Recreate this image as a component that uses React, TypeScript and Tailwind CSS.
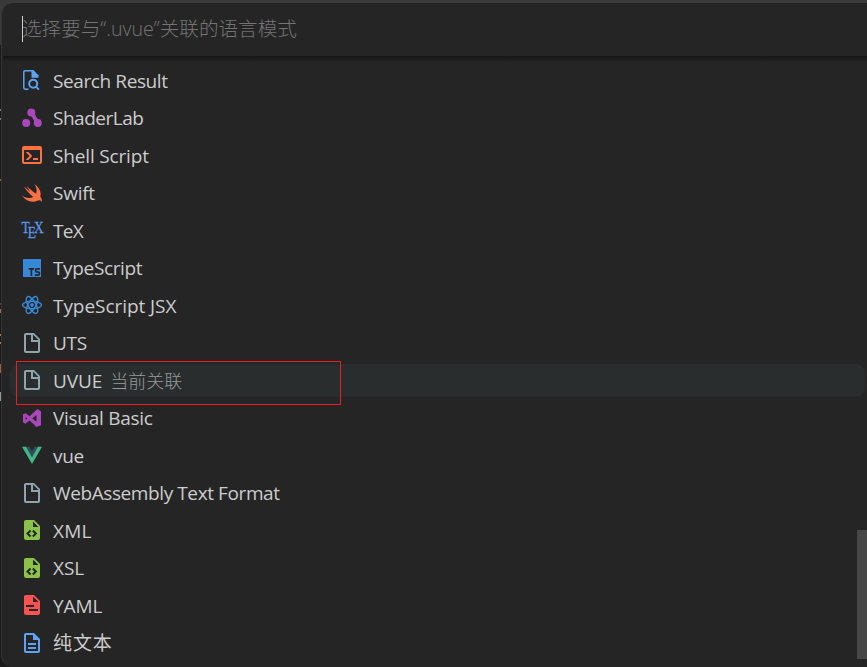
import React from 'react';

const FILE = 'M6 2h8l6 6v12a2 2 0 0 1-2 2H6a2 2 0 0 1-2-2V4c0-1.11.89-2 2-2';

function Svg({ children }: { children: React.ReactNode }) {
  return (
    <svg viewBox="0 0 24 24" className="block h-6 w-6 shrink-0 overflow-visible">
      {children}
    </svg>
  );
}

const plainFile = (
  <Svg>
    <path fill="#90a4ae" d="M13 9h5.500L13 3.500V9M6 2h8l6 6v12a2 2 0 0 1-2 2H6a2 2 0 0 1-2-2V4c0-1.110.890-2 2-2m5 2H6v16h12v-9h-7V4z" />
  </Svg>
);

const xmlFile = (
  <Svg>
    <path
      fill="#8bc34a"
      d={`M13 9h5.500L13 3.500V9${FILE}M6.120 15.500L9.860 19.240L11.280 17.830L8.950 15.500L11.280 13.170L9.860 11.760L6.120 15.500M17.280 15.500L13.540 11.760L12.120 13.170L14.450 15.500L12.120 17.830L13.540 19.240L17.280 15.500Z`}
    />
  </Svg>
);

const icons: Record<string, React.ReactNode> = {
  search: (
    <Svg>
      <path fill="none" stroke="#5ca3f5" strokeWidth="1.500" d="M8.500 21.200H5.200a1.400 1.400 0 0 1-1.400-1.400V4.100a1.400 1.400 0 0 1 1.400-1.400H12" />
      <path fill="#5ca3f5" d="M11.500 2H13.300L18.500 7.200V9.800h-7z" />
      <circle cx="13.200" cy="15.700" r="4" fill="none" stroke="#5ca3f5" strokeWidth="2" />
      <path stroke="#5ca3f5" strokeWidth="2" d="M15.900 18.600l3 3" />
    </Svg>
  ),
  shader: (
    <Svg>
      <path stroke="#ab47bc" strokeWidth="4" d="M11.500 6.500l6.500 11" />
      <g fill="#ab47bc">
        <circle cx="11.300" cy="6.500" r="4" />
        <circle cx="6.200" cy="16.900" r="4" />
        <circle cx="17.800" cy="16.900" r="4" />
      </g>
    </Svg>
  ),
  shell: (
    <Svg>
      <path fill="#ff7043" d="M20 19V7H4V19H20M20 3A2 2 0 0 1 22 5V19A2 2 0 0 1 20 21H4A2 2 0 0 1 2 19V5C2 3.890 2.900 3 4 3H20M13 17V15H18V17H13M9.580 13L5.570 9H8.400L11.700 12.300C12.090 12.690 12.090 13.330 11.700 13.720L8.420 17H5.590L9.580 13Z" />
    </Svg>
  ),
  swift: (
    <Svg>
      <path fill="#ff7043" d="M17.090 19.720C14.730 21.080 11.500 21.220 8.230 19.820C5.590 18.700 3.400 16.740 2 14.500C2.670 15.050 3.460 15.500 4.300 15.900C7.670 17.470 11.030 17.360 13.400 15.900C10.030 13.310 7.160 9.940 5.030 7.190C4.580 6.740 4.250 6.180 3.910 5.680C12.190 11.730 11.830 13.270 6.320 4.670C11.210 9.610 15.750 12.410 15.750 12.410C15.910 12.500 16 12.570 16.110 12.630C16.210 12.380 16.300 12.120 16.370 11.850C17.160 9 16.260 5.730 14.290 3.040C18.840 5.790 21.540 10.950 20.410 15.280C20.380 15.390 20.350 15.500 20.360 15.670C22.600 18.500 22 21.450 21.710 20.890C20.500 18.500 18.230 19.240 17.090 19.720Z" />
    </Svg>
  ),
  tex: (
    <Svg>
      <text
        x="1.800 9.300 16.800"
        y="15 20 15"
        transform="scale(.84 1)"
        fill="#5a9ae8"
        stroke="#5a9ae8"
        strokeWidth="0.250"
        fontFamily="Liberation Serif, serif"
        fontSize="16"
      >
        TEX
      </text>
    </Svg>
  ),
  ts: (
    <Svg>
      <path fill="#3788d8" d="M3 3h18v18H3z" />
      <path fill="none" stroke="#252526" strokeWidth="1.700" d="M8.800 12.800h5.200M11.400 12.800V20M19.900 12.800h-3q-1.400 0-1.400 1.600t1.400 1.600h1.200q1.400 0 1.400 1.600t-1.400 1.600h-3.200" />
    </Svg>
  ),
  react: (
    <Svg>
      <g fill="none" stroke="#3788d8" strokeWidth="1.400">
        <ellipse cx="12" cy="12" rx="9.500" ry="3.800" />
        <ellipse cx="12" cy="12" rx="9.500" ry="3.800" transform="rotate(60 12 12)" />
        <ellipse cx="12" cy="12" rx="9.500" ry="3.800" transform="rotate(120 12 12)" />
      </g>
      <circle cx="12" cy="12" r="1.900" fill="#3788d8" />
    </Svg>
  ),
  file: plainFile,
  vs: (
    <Svg>
      <path fill="#ab47bc" d="M17 8.500L12.250 12.320L17 16V8.500M4.700 18.400L2 16.700V7.700L5 6.700L9.300 10.030L18 2L22 4.500V20L17 22L9.340 14.660L4.700 18.400M5 14L6.860 12.280L5 10.500V14Z" transform="translate(1.200 1.300) scale(.9)" />
    </Svg>
  ),
  vue: (
    <Svg>
      <path fill="#35495e" d="M5.500 3.800H9.500L12 8L14.500 3.800H18.500L12 15Z" />
      <path fill="#41b883" d="M2 3.800H6L12 14.200L18 3.800H22L12 21Z" />
    </Svg>
  ),
  xml: xmlFile,
  yaml: (
    <Svg>
      <path fill="#ff5252" d="M13 9h5.500L13 3.500V9M6 2h8l6 6v12c0 1.100-.9 2-2 2H6a2 2 0 0 1-2-2V4c0-1.110.890-2 2-2m12 16v-2H9v2h9m-4-4v-2H6v2h8z" />
    </Svg>
  ),
  doc: (
    <Svg>
      <path fill="#5ca3f5" d="M8 16h8v2H8v-2m0-4h8v2H8v-2m6-10H6c-1.100 0-2 .9-2 2v16c0 1.100.890 2 2 2h12c1.100 0 2-.9 2-2V8l-6-6m4 18H6V4h7v5h5v11z" />
    </Svg>
  ),
};

const rows: { icon: string; label: string; track: string; note?: string }[] = [
  { icon: 'search', label: 'Search Result', track: 'tracking-[-0.400px]' },
  { icon: 'shader', label: 'ShaderLab', track: 'tracking-[-0.480px]' },
  { icon: 'shell', label: 'Shell Script', track: 'tracking-[-0.160px]' },
  { icon: 'swift', label: 'Swift', track: 'tracking-[-0.250px]' },
  { icon: 'tex', label: 'TeX', track: 'tracking-[-0.700px]' },
  { icon: 'ts', label: 'TypeScript', track: 'tracking-[-0.350px]' },
  { icon: 'react', label: 'TypeScript JSX', track: 'tracking-[-0.060px]' },
  { icon: 'file', label: 'UTS', track: 'tracking-[-0.300px]' },
  { icon: 'file', label: 'UVUE', track: 'tracking-[-0.100px]', note: '当前关联' },
  { icon: 'vs', label: 'Visual Basic', track: 'tracking-[-0.270px]' },
  { icon: 'vue', label: 'vue', track: 'tracking-[-0.300px]' },
  { icon: 'file', label: 'WebAssembly Text Format', track: 'tracking-[-0.400px]' },
  { icon: 'xml', label: 'XML', track: 'tracking-[0.200px]' },
  { icon: 'xml', label: 'XSL', track: 'tracking-[-0.100px]' },
  { icon: 'yaml', label: 'YAML', track: 'tracking-[-0.100px]' },
  { icon: 'doc', label: '纯文本', track: 'tracking-[0.900px]' },
];

const marks = [
  'top-[109px] h-[2px] bg-[#6b8298]',
  'top-[118px] h-[2px] bg-[#6b8298]',
  'top-[179px] h-[2px] bg-[#a4583a]',
  'top-[303px] h-[2px] bg-[#7a3520]',
  'top-[309px] h-[4px] bg-[#b4643c]',
  'top-[334px] h-[2px] bg-[#a87850]',
  'top-[342px] h-[2px] bg-[#a87850]',
  'top-[364px] h-[9px] bg-[#a95a30]',
  'top-[392px] h-[9px] bg-[#8a9a88]',
];

export default function App() {
  return (
    <div className="relative h-[667px] w-[867px] overflow-hidden bg-[#1a1a1a] pt-[3px] pl-px font-['Open_Sans','Noto_Sans_CJK_SC',sans-serif] text-[19px] text-[#cccccc]">
      <div className="absolute top-0 left-0 h-[45px] w-full bg-[#3a3a3a]" />
      {marks.map((m) => (
        <i key={m} className={`absolute left-0 w-px ${m}`} />
      ))}
      <div className="relative flex h-[664px] w-[866px] flex-col overflow-hidden rounded-l-[12px] border-l border-[#343434] bg-[#252526] pl-px">
        <header className="relative flex h-[53px] shrink-0 items-center pl-[19px]">
          <span className="mb-[2px] h-[26px] w-px bg-[#d0d0d0]" />
          <span className="-ml-px whitespace-nowrap pb-px text-[19.6px] font-light text-[#747474]">选择要与“.uvue”关联的语言模式</span>
        </header>
        <div className="h-[6px] shrink-0 bg-linear-to-b from-[#151515] to-[#252526]" />
        <ul className="flex w-[862px] flex-col pl-[7px]">
          {rows.map((r, i) => (
            <li key={i} className="flex h-[37.5px] shrink-0 items-center">
              <div className={`flex h-[33px] w-full items-center rounded-[9px] pl-[10px] ${r.note ? 'bg-[#2a2d2e]' : ''}`}>
                <span className="-mt-px">{icons[r.icon]}</span>
                <span className={`ml-[9px] whitespace-pre pt-px leading-[33px] ${r.track}`}>{r.label}</span>
                {r.note && <span className="ml-2 pt-px text-[18px] font-light leading-[33px] text-[#989898]">{r.note}</span>}
              </div>
            </li>
          ))}
        </ul>
      </div>
      <div className="absolute top-[530px] right-0 h-[129px] w-[10px] bg-[#474747]" />
      <div className="absolute top-[361px] left-[16px] h-[44px] w-[325px] border border-[#e81e25]" />
    </div>
  );
}
